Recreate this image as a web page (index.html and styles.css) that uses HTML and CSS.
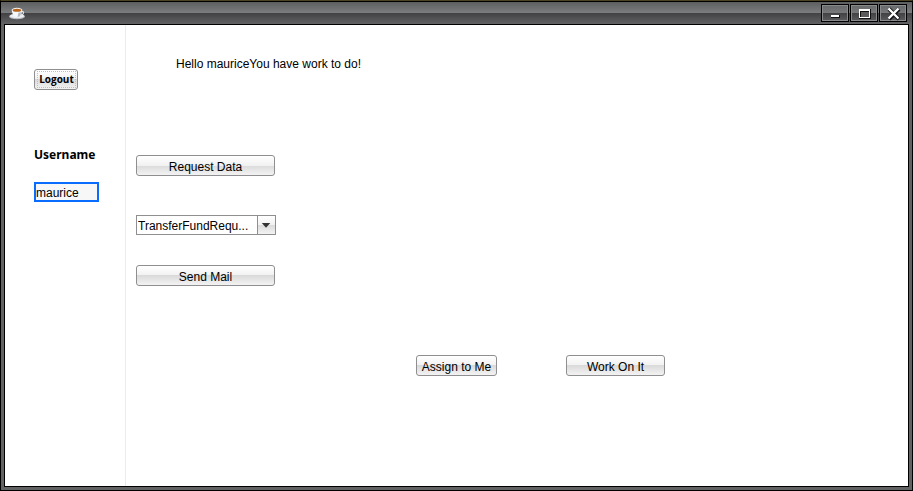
FILE: index.html
```html
<!DOCTYPE html>
<html lang="en">
<head>
<meta charset="utf-8">
<title>Work list</title>
<link rel="stylesheet" href="styles.css">
</head>
<body>
<div class="window">
  <header class="titlebar">
    <svg class="cup" viewBox="0 0 16 13" aria-hidden="true">
      <ellipse cx="8" cy="9.5" rx="8" ry="2.8" fill="#b9bcc2"/>
      <ellipse cx="8" cy="8.9" rx="7.2" ry="2.1" fill="#eceef1"/>
      <path d="M12.500 4.500h1.600q1.400 2-1.800 3.600" fill="none" stroke="#dfe2e6" stroke-width="1.2"/>
      <path d="M2.800 3.200h10.400q-.2 4.400-2.800 6.600H6Q3 7.600 2.800 3.200z" fill="#f7f8fa"/>
      <path d="M9.500 5.500h3q-.6 2.800-2.400 4.200H8.500z" fill="#b4b9c2"/>
      <ellipse cx="8" cy="3" rx="5.400" ry="2.200" fill="#f4f4f4"/>
      <ellipse cx="8" cy="3.200" rx="4.300" ry="1.500" fill="#b8651c"/>
    </svg>
    <div class="controls">
      <button type="button" class="control" aria-label="Minimize"><svg viewBox="0 0 26 16"><path d="M9 10h9v3H9z" fill="#111"/><path d="M9 10h8v2H9z" fill="#fff"/></svg></button>
      <button type="button" class="control" aria-label="Maximize"><svg viewBox="0 0 26 16"><path d="M8 4h12v10H8z" fill="#111"/><path d="M8 4h11v9H8z" fill="#fff"/><path d="M9 6h9v6H9z" fill="#111"/><path d="M10 7h8v5h-8z" fill="#5b5b5d"/></svg></button>
      <button type="button" class="control" aria-label="Close"><svg viewBox="0 0 26 16"><path d="M9 4l10 10M19 4L9 14" stroke="#111" stroke-width="4"/><path d="M8.500 3.500l10 10M18.500 3.500l-10 10" stroke="#fff" stroke-width="2.400"/></svg></button>
    </div>
  </header>
  <div class="content">
    <aside class="sidebar">
      <button type="button" class="button logout"><span class="focus">Logout</span></button>
      <label class="label" for="username">Username</label>
      <input class="field" id="username" type="text" value="maurice">
    </aside>
    <main class="main">
      <p class="greeting">Hello mauriceYou have work to do!</p>
      <div class="stack">
        <button type="button" class="button wide">Request Data</button>
        <div class="combo">
          <select class="select" aria-label="Request type"><option>TransferFundRequ...</option></select>
          <svg class="arrow" viewBox="0 0 18 18" aria-hidden="true"><path d="M4 7h9L8.500 12z" fill="#333"/></svg>
        </div>
        <button type="button" class="button wide">Send Mail</button>
      </div>
      <div class="actions">
        <button type="button" class="button assign">Assign to Me</button>
        <button type="button" class="button work">Work On It</button>
      </div>
    </main>
  </div>
</div>
</body>
</html>
```
FILE: styles.css
```css
* { box-sizing: border-box; }

body {
  margin: 0;
  background: #000;
  color: #000;
  font: 12px/16px "Liberation Sans", Arial, sans-serif;
}

.window {
  display: flex;
  flex-direction: column;
  min-height: 100vh;
  padding: 0 3px 3px;
  border: 1px solid #000;
  border-top-color: #4a4222;
  background: #626262;
}

.titlebar {
  display: flex;
  align-items: flex-start;
  justify-content: space-between;
  height: 23px;
  margin: 0 -3px;
  padding: 3px 5px 0 8px;
  border-top: 1px solid #000;
  background: linear-gradient(#5c5e60, #7b7d7f 11px, #414143 11px, #626264);
}

.cup { width: 16px; height: 13px; margin-top: 2px; }

.controls { display: flex; gap: 1px; margin-top: -1px; }

.control {
  width: 28px;
  height: 18px;
  padding: 0;
  border: 1px solid #000;
  background: linear-gradient(#66686a, #77797b 8px, #414143 8px, #5c5c5e);
  box-shadow: inset 0 0 0 1px #8a8a8c;
}

.control svg { display: block; width: 26px; height: 16px; }

.content {
  display: flex;
  flex: 1;
  border: 1px solid #000;
  background: #fff;
}

.sidebar {
  display: flex;
  flex-direction: column;
  align-items: flex-start;
  width: 121px;
  padding: 44px 26px 0 29px;
  border-right: 1px solid #ececec;
}

.button {
  height: 21px;
  padding: 2px 0 0;
  border: 1px solid #8f8f91;
  border-radius: 3px;
  background: linear-gradient(#fff, #f1f1f1 50%, #dadada 50%, #f3f3f3);
  color: #000;
  font: inherit;
}

.logout {
  width: 44px;
  padding: 0 1px 0 2px;
  font: bold 10px/15px "Open Sans", sans-serif;
}

/* Focus ring: alternating one-pixel dots along each edge. */
.focus {
  display: block;
  height: 17px;
  padding: 1px 0;
  background:
    repeating-linear-gradient(90deg, #ffc400 0 1px, transparent 1px 2px) top / 100% 1px no-repeat,
    repeating-linear-gradient(90deg, #ffc400 0 1px, transparent 1px 2px) bottom / 100% 1px no-repeat,
    repeating-linear-gradient(#ffc400 0 1px, transparent 1px 2px) left / 1px 100% no-repeat,
    repeating-linear-gradient(#ffc400 0 1px, transparent 1px 2px) right / 1px 100% no-repeat;
}

.label {
  margin-top: 57px;
  font: bold 12px/16px "Noto Sans", sans-serif;
}

.field {
  width: 65px;
  height: 20px;
  margin-top: 19px;
  padding: 1px 0 0;
  border: 2px solid #0a6cff;
  background: #f7f7f7;
  font: inherit;
  outline: none;
}

.main { flex: 1; padding: 31px 10px 0; }

.greeting { margin: 0 0 0 40px; }

.stack {
  display: flex;
  flex-direction: column;
  align-items: flex-start;
  margin-top: 83px;
}

.wide { width: 139px; }

.combo {
  display: flex;
  position: relative;
  width: 140px;
  height: 20px;
  margin: 39px 0 30px;
  border: 1px solid #8f8f91;
}

.select {
  flex: 1;
  min-width: 0;
  padding: 2px 19px 0 1px;
  border: 0;
  border-radius: 0;
  appearance: none;
  background: #fff;
  color: #000;
  font: inherit;
}

.arrow {
  position: absolute;
  top: 0;
  right: 0;
  width: 18px;
  height: 18px;
  border-left: 1px solid #8f8f91;
  background: linear-gradient(#fff, #f1f1f1 50%, #dadada 50%, #f3f3f3);
  pointer-events: none;
}

.actions {
  display: flex;
  gap: 69px;
  margin: 69px 0 0 280px;
}

.assign { width: 81px; }

.work { width: 99px; }
```
